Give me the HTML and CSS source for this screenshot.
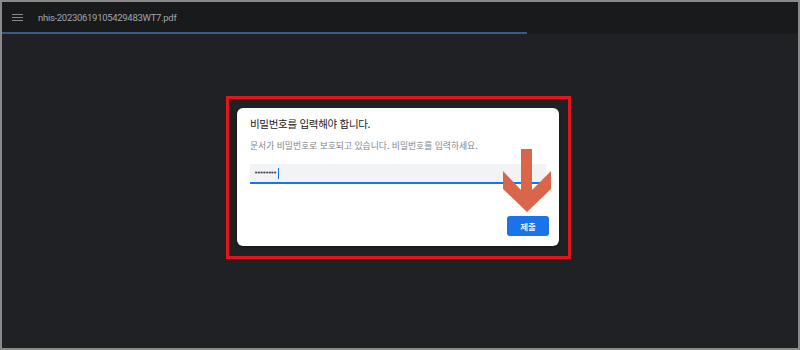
FILE: index.html
```html
<!DOCTYPE html>
<html lang="ko">
<head>
    <meta charset="UTF-8">
    <title>nhis-20230619105429483WT7.pdf</title>
    <link rel="stylesheet" href="styles.css">
</head>
<body>
    <div class="frame">
        <div class="toolbar">
            <div class="menu-icon">
                <span></span><span></span><span></span>
            </div>
            <div class="file-name">nhis-20230619105429483WT7.pdf</div>
        </div>
        <div class="progress"><div class="progress-fill"></div></div>
        <div class="viewer">
            <div class="highlight">
                <div class="dialog">
                    <h2 class="dialog-title">비밀번호를 입력해야 합니다.</h2>
                    <p class="dialog-text">문서가 비밀번호로 보호되고 있습니다. 비밀번호를 입력하세요.</p>
                    <div class="password-field">
                        <span class="dots">••••••••</span><span class="caret"></span>
                    </div>
                    <div class="dialog-actions">
                        <button class="submit-button">제출</button>
                    </div>
                    <svg class="arrow" width="48" height="63" viewBox="0 0 48 63">
                        <polygon points="18,0 29,0 29,41 48,22 48,40 24,63 0,40 0,22 18,41" fill="#d9654a"/>
                    </svg>
                </div>
            </div>
        </div>
    </div>
</body>
</html>
```

FILE: styles.css
```css
body {
    margin: 0;
    font-family: Roboto, "Noto Sans CJK KR", sans-serif;
    background-color: #202124;
}

.frame {
    width: 800px;
    height: 350px;
    box-sizing: border-box;
    border: 2px solid #8a8a8a;
    background-color: #202124;
    display: flex;
    flex-direction: column;
}

.toolbar {
    height: 30px;
    background-color: #191a1c;
    display: flex;
    align-items: center;
    padding-left: 10px;
}

.menu-icon {
    width: 11px;
    display: flex;
    flex-direction: column;
    gap: 2px;
    margin-top: 1px;
}

.menu-icon span {
    height: 1px;
    background-color: #85898e;
}

.file-name {
    margin-left: 15px;
    font-size: 9.5px;
    color: #a3a6aa;
    letter-spacing: -0.3px;
}

.progress {
    height: 2px;
    background-color: #191a1c;
}

.progress-fill {
    width: 525px;
    height: 2px;
    background-color: #3d5a86;
}

.viewer {
    flex: 1;
    display: flex;
    justify-content: center;
    align-items: flex-start;
    padding-top: 62px;
    padding-right: 3px;
}

.highlight {
    border: 3px solid #e3141c;
    padding: 9px 9px 10px 8px;
}

.dialog {
    position: relative;
    width: 322px;
    height: 138px;
    box-sizing: border-box;
    background-color: #fff;
    border-radius: 6px;
    box-shadow: 0 1px 3px rgba(0, 0, 0, 0.4);
    padding: 8px 13px 0 13px;
    font-family: "Noto Sans CJK KR", sans-serif;
}

.dialog-title {
    margin: 0;
    font-size: 10.5px;
    font-weight: 400;
    color: #202124;
    letter-spacing: -0.3px;
    line-height: 16px;
}

.dialog-text {
    margin: 8px 0 0;
    font-size: 8.8px;
    color: #80868b;
    line-height: 12px;
    letter-spacing: 0;
}

.password-field {
    margin-top: 12px;
    width: 292px;
    height: 18px;
    background-color: #f1f3f4;
    border-bottom: 2px solid #1a73e8;
    display: flex;
    align-items: center;
    padding-left: 4px;
}

.dots {
    font-family: "DejaVu Sans", sans-serif;
    font-size: 7px;
    color: #3c4043;
    letter-spacing: -1.4px;
}

.caret {
    width: 1px;
    height: 11px;
    background-color: #1a73e8;
    margin-left: 2px;
}

.dialog-actions {
    display: flex;
    justify-content: flex-end;
    margin-top: 32px;
}

.submit-button {
    width: 42px;
    height: 20px;
    margin-right: -3px;
    border: none;
    border-radius: 3px;
    background-color: #1a73e8;
    color: #fff;
    font-family: "Noto Sans CJK KR", sans-serif;
    font-size: 8.5px;
    font-weight: 500;
    padding: 0;
}

.arrow {
    position: absolute;
    left: 266px;
    top: 41px;
}
```
